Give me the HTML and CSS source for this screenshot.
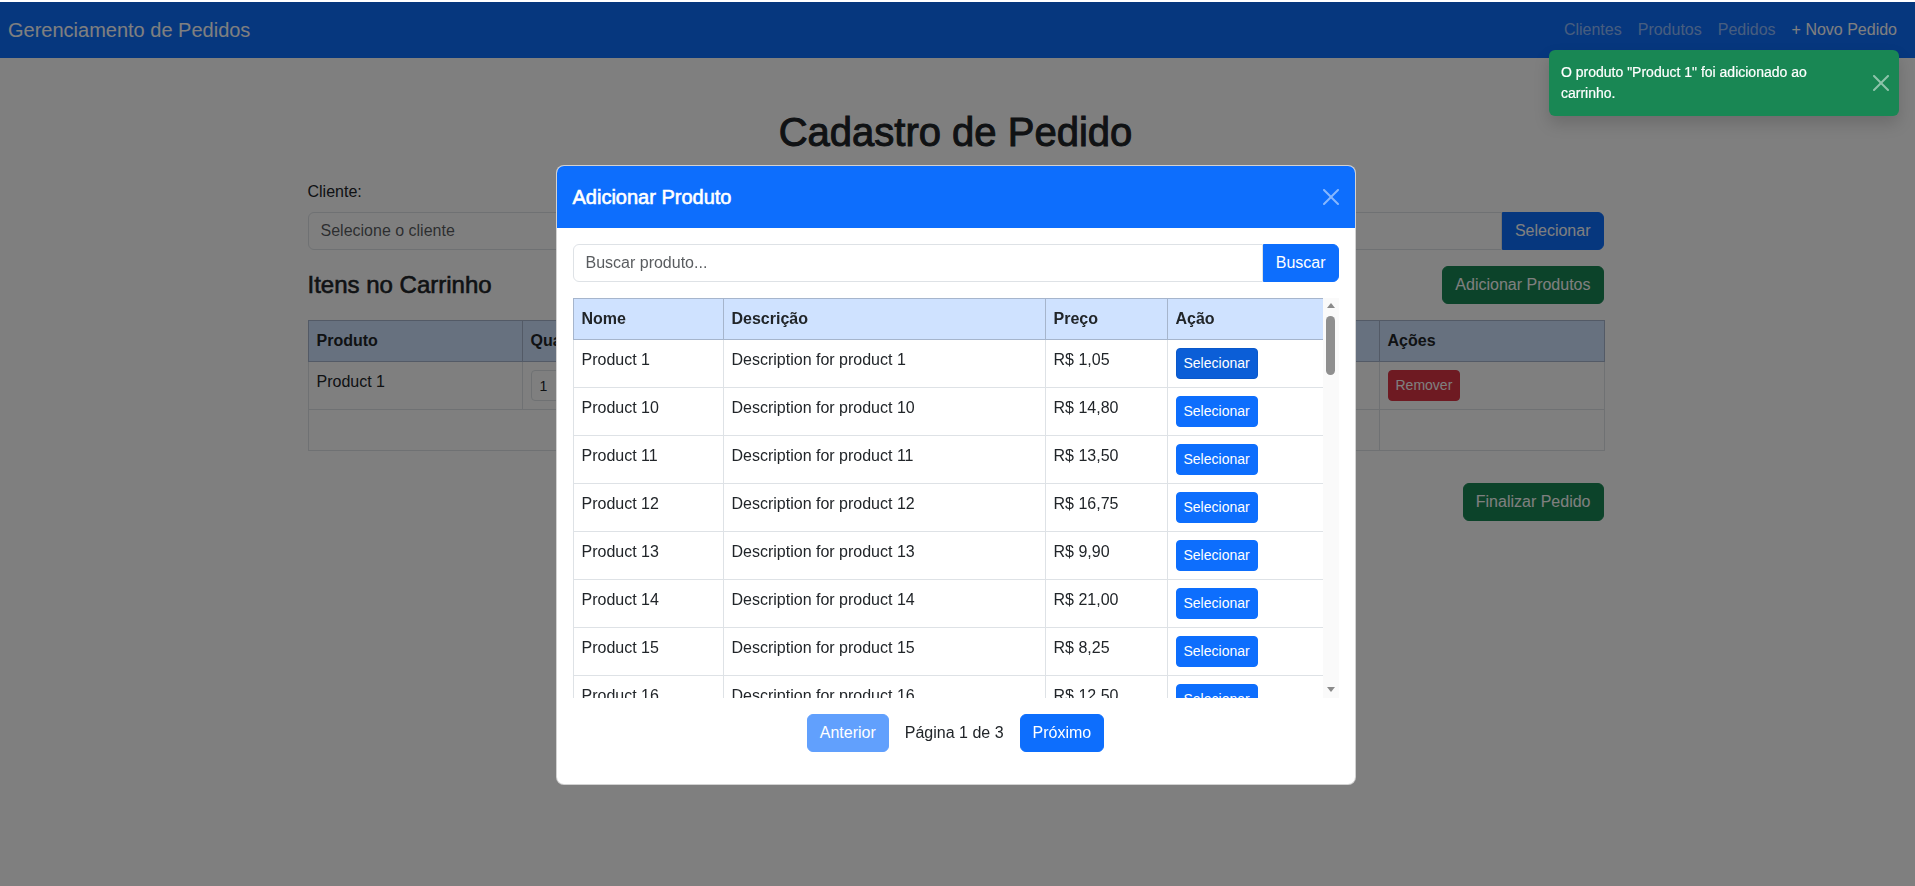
FILE: index.html
```html
<!DOCTYPE html>
<html lang="pt-BR">
<head>
<meta charset="utf-8">
<title>Cadastro de Pedido</title>
<link rel="stylesheet" href="styles.css">
</head>
<body>
<nav class="navbar">
  <a class="brand" href="#">Gerenciamento de Pedidos</a>
  <div class="nav">
    <a class="nav-link" href="#">Clientes</a>
    <a class="nav-link" href="#">Produtos</a>
    <a class="nav-link" href="#">Pedidos</a>
    <a class="nav-link active" href="#">+ Novo Pedido</a>
  </div>
</nav>

<main class="container">
  <h1 class="page-title">Cadastro de Pedido</h1>
  <label class="form-label">Cliente:</label>
  <div class="input-group mb-3">
    <input class="form-control" type="text" placeholder="Selecione o cliente" readonly>
    <button class="btn btn-primary">Selecionar</button>
  </div>
  <div class="cart-head mb-3">
    <h4 class="cart-title">Itens no Carrinho</h4>
    <button class="btn btn-success">Adicionar Produtos</button>
  </div>
  <table class="table cart-table">
    <colgroup>
      <col class="c-prod"><col class="c-qty"><col class="c-price"><col class="c-sub"><col class="c-act">
    </colgroup>
    <thead>
      <tr><th>Produto</th><th>Quantidade</th><th>Preço Unitário</th><th>Subtotal</th><th>Ações</th></tr>
    </thead>
    <tbody>
      <tr>
        <td>Product 1</td>
        <td><input class="form-control form-control-sm qty" type="number" value="1"></td>
        <td>R$ 1,05</td>
        <td>R$ 1,05</td>
        <td><button class="btn btn-sm btn-danger">Remover</button></td>
      </tr>
      <tr>
        <td colspan="3" class="text-end"><strong>Total:</strong></td>
        <td><strong>R$ 1,05</strong></td>
        <td></td>
      </tr>
    </tbody>
  </table>
  <div class="text-end finalize">
    <button class="btn btn-success">Finalizar Pedido</button>
  </div>
</main>

<div class="backdrop"></div>

<div class="modal">
  <div class="modal-dialog">
    <div class="modal-content">
      <div class="modal-header">
        <h5 class="modal-title">Adicionar Produto</h5>
        <button class="close-btn" aria-label="Fechar">
          <svg viewBox="0 0 16 16" width="16" height="16"><path fill="#fff" d="M.293.293a1 1 0 0 1 1.414 0L8 6.586 14.293.293a1 1 0 1 1 1.414 1.414L9.414 8l6.293 6.293a1 1 0 0 1-1.414 1.414L8 9.414l-6.293 6.293a1 1 0 0 1-1.414-1.414L6.586 8 .293 1.707a1 1 0 0 1 0-1.414z"/></svg>
        </button>
      </div>
      <div class="modal-body">
        <div class="input-group mb-3">
          <input class="form-control" type="text" placeholder="Buscar produto...">
          <button class="btn btn-primary">Buscar</button>
        </div>
        <div class="table-scroll">
          <div class="table-viewport">
            <table class="table product-table">
              <colgroup>
                <col class="p-name"><col class="p-desc"><col class="p-price"><col class="p-act">
              </colgroup>
              <thead>
                <tr><th>Nome</th><th>Descrição</th><th>Preço</th><th>Ação</th></tr>
              </thead>
              <tbody>
                <tr><td>Product 1</td><td>Description for product 1</td><td>R$ 1,05</td><td><button class="btn btn-sm btn-primary hovered">Selecionar</button></td></tr>
                <tr><td>Product 10</td><td>Description for product 10</td><td>R$ 14,80</td><td><button class="btn btn-sm btn-primary">Selecionar</button></td></tr>
                <tr><td>Product 11</td><td>Description for product 11</td><td>R$ 13,50</td><td><button class="btn btn-sm btn-primary">Selecionar</button></td></tr>
                <tr><td>Product 12</td><td>Description for product 12</td><td>R$ 16,75</td><td><button class="btn btn-sm btn-primary">Selecionar</button></td></tr>
                <tr><td>Product 13</td><td>Description for product 13</td><td>R$ 9,90</td><td><button class="btn btn-sm btn-primary">Selecionar</button></td></tr>
                <tr><td>Product 14</td><td>Description for product 14</td><td>R$ 21,00</td><td><button class="btn btn-sm btn-primary">Selecionar</button></td></tr>
                <tr><td>Product 15</td><td>Description for product 15</td><td>R$ 8,25</td><td><button class="btn btn-sm btn-primary">Selecionar</button></td></tr>
                <tr><td>Product 16</td><td>Description for product 16</td><td>R$ 12,50</td><td><button class="btn btn-sm btn-primary">Selecionar</button></td></tr>
                <tr><td>Product 17</td><td>Description for product 17</td><td>R$ 7,40</td><td><button class="btn btn-sm btn-primary">Selecionar</button></td></tr>
                <tr><td>Product 18</td><td>Description for product 18</td><td>R$ 19,99</td><td><button class="btn btn-sm btn-primary">Selecionar</button></td></tr>
              </tbody>
            </table>
          </div>
          <div class="scrollbar">
            <span class="arrow-up"></span>
            <span class="thumb"></span>
            <span class="track-fill"></span>
            <span class="arrow-down"></span>
          </div>
        </div>
        <div class="pager">
          <button class="btn btn-primary disabled">Anterior</button>
          <span class="pager-text">Página 1 de 3</span>
          <button class="btn btn-primary">Próximo</button>
        </div>
      </div>
    </div>
  </div>
</div>

<div class="toast-container">
  <div class="toast">
    <div class="toast-body">O produto "Product 1" foi adicionado ao carrinho.</div>
    <button class="close-btn toast-close" aria-label="Fechar">
      <svg viewBox="0 0 16 16" width="16" height="16"><path fill="#fff" d="M.293.293a1 1 0 0 1 1.414 0L8 6.586 14.293.293a1 1 0 1 1 1.414 1.414L9.414 8l6.293 6.293a1 1 0 0 1-1.414 1.414L8 9.414l-6.293 6.293a1 1 0 0 1-1.414-1.414L6.586 8 .293 1.707a1 1 0 0 1 0-1.414z"/></svg>
    </button>
  </div>
</div>
</body>
</html>
```
FILE: styles.css
```css
* { box-sizing: border-box; }
html { background: #fff; }
body {
  margin: 0;
  padding: 2px 4px 0 0;
  font-family: "Liberation Sans", Arial, sans-serif;
  font-size: 16px;
  line-height: 1.5;
  color: #212529;
  background: #fff;
  overflow: hidden;
}

/* navbar */
.navbar {
  height: 56px;
  background: #0d6efd;
  display: flex;
  align-items: center;
  justify-content: space-between;
  padding: 0 10px 0 8px;
  margin-right: -4px;
}
.brand { color: #fff; font-size: 20px; line-height: 30px; text-decoration: none; }
.nav { display: flex; }
.nav-link { color: rgba(255,255,255,.55); padding: 8px; line-height: 24px; text-decoration: none; }
.nav-link.active { color: #fff; }

/* page */
.container { max-width: 1320px; margin: 0 auto; padding: 50px 12px 0; }
.page-title {
  font-size: 40px; line-height: 1.2; font-weight: 400;
  text-align: center; margin: 0 0 24px;
  -webkit-text-stroke: 1px currentColor;
}
.form-label { display: block; margin-bottom: 8px; }
.mb-3 { margin-bottom: 16px; }
.text-end { text-align: right; }

.input-group { display: flex; }
.form-control {
  flex: 1; min-width: 0;
  height: 38px; padding: 6px 12px;
  border: 1px solid #dee2e6; border-radius: 6px;
  font: inherit; font-size: 16px; line-height: 24px;
  color: #212529; background: #fff; outline: none;
}
.form-control::placeholder { color: rgba(33,37,41,.75); }
.input-group .form-control { border-top-right-radius: 0; border-bottom-right-radius: 0; }
.input-group .btn { border-top-left-radius: 0; border-bottom-left-radius: 0; }

.btn {
  display: inline-block;
  padding: 6px 12px;
  font-family: inherit; font-size: 16px; line-height: 24px;
  border: 1px solid transparent; border-radius: 6px;
  color: #fff; cursor: pointer; white-space: nowrap;
}
.btn-primary { background: #0d6efd; border-color: #0d6efd; }
.btn-primary.hovered { background: #0b5ed7; border-color: #0a58ca; }
.btn-primary.disabled { opacity: .65; }
.btn-success { background: #198754; border-color: #198754; }
.btn-danger { background: #dc3545; border-color: #dc3545; }
.btn-sm { padding: 4px 7px; font-size: 14px; line-height: 21px; border-radius: 4px; }

.cart-head { display: flex; justify-content: space-between; align-items: center; }
.cart-title {
  margin: 0; font-size: 24px; line-height: 1.2; font-weight: 400;
  -webkit-text-stroke: .6px currentColor;
}

/* tables */
.table { width: 100%; border-collapse: collapse; table-layout: fixed; color: #212529; }
.table th, .table td {
  padding: 8px; border: 1px solid #dee2e6;
  vertical-align: top; text-align: left;
  white-space: nowrap; overflow: hidden;
}
.table thead th { background: #cfe2ff; border-color: #a6b5cc; font-weight: 700; }
.table td.text-end { text-align: right; }
.cart-table { margin-bottom: 16px; }
.c-prod { width: 214px; }
.c-qty { width: 250px; }
.c-price { width: 300px; }
.c-sub { width: 307px; }
.c-act { width: 225px; }
.form-control-sm.qty {
  width: 90px; height: 31px; padding: 4px 8px;
  font-size: 14px; line-height: 21px; border-radius: 4px;
}
.finalize { padding-top: 16px; }

/* overlays */
.backdrop { position: fixed; top: 2px; left: 0; right: 0; bottom: 0; background: rgba(0,0,0,.5); z-index: 1040; }
.modal {
  position: fixed; inset: 0; z-index: 1050;
  display: flex; justify-content: center; align-items: flex-start;
  padding-right: 4px;
}
.modal-dialog { width: 800px; margin-top: 165px; }
.modal-content {
  background: #fff;
  border: 1px solid rgba(0,0,0,.175);
  border-radius: 8px;
  overflow: hidden;
}
.modal-header {
  display: flex; align-items: center; justify-content: space-between;
  padding: 16px; background: #0d6efd; color: #fff;
}
.modal-title {
  margin: 0; font-size: 20px; line-height: 30px; font-weight: 400;
  -webkit-text-stroke: .6px currentColor;
}
.close-btn {
  display: flex; width: 16px; height: 16px; padding: 0;
  border: 0; background: transparent; opacity: .5; cursor: pointer;
}
.close-btn svg { display: block; }
.modal-body { padding: 16px; }

.table-scroll { display: flex; height: 400px; }
.table-viewport { flex: 1; overflow: hidden; }
.product-table { width: 750px; }
.p-name { width: 150px; }
.p-desc { width: 322px; }
.p-price { width: 122px; }
.p-act { width: 156px; }

.scrollbar {
  width: 16px; background: #fafafa;
  display: flex; flex-direction: column; align-items: center;
  padding: 5px 0 6px;
}
.arrow-up, .arrow-down { width: 0; height: 0; border-left: 4.5px solid transparent; border-right: 4.5px solid transparent; }
.arrow-up { border-bottom: 5px solid #8a8a8a; }
.arrow-down { border-top: 5px solid #8a8a8a; }
.thumb { width: 9px; height: 59px; margin-top: 8px; border-radius: 5px; background: #8f8f8f; }
.track-fill { flex: 1; }

.pager { display: flex; justify-content: center; align-items: center; margin: 16px 0; }
.pager-text { margin: 0 16px; color: #212529; }

.toast-container { position: fixed; top: 50px; right: 16px; z-index: 1090; }
.toast {
  width: 350px; display: flex; align-items: center;
  background: #198754; color: #fff;
  border-radius: 6px;
  box-shadow: 0 8px 16px rgba(0,0,0,.15);
  font-size: 14px; line-height: 21px;
}
.toast-body { flex: 1; padding: 12px; -webkit-text-stroke: .2px currentColor; }
.toast-close { margin: auto 10px auto 4px; }
```
